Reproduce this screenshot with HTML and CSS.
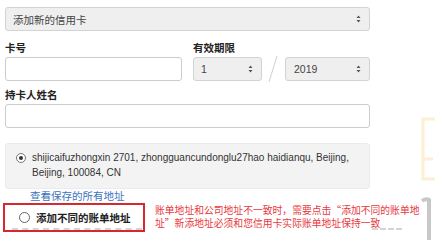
FILE: index.html
```html
<!DOCTYPE html>
<html lang="zh-CN">
<head>
<meta charset="utf-8">
<title>添加新的信用卡</title>
<link rel="stylesheet" href="styles.css">
</head>
<body>
<div class="page">
  <form class="form">
    <div class="select select-wide">
      <span>添加新的信用卡</span>
      <svg class="arrows" width="5" height="8" viewBox="0 0 5 8"><path d="M2.5 0.5 L4.5 3 L0.5 3 Z M2.5 7.5 L4.5 5 L0.5 5 Z" fill="#555"/></svg>
    </div>

    <div class="row">
      <div class="col">
        <div class="label">卡号</div>
        <div class="input"></div>
      </div>
      <div class="col">
        <div class="label">有效期限</div>
        <div class="expiry">
          <div class="select select-month">
            <span>1</span>
            <svg class="arrows" width="5" height="8" viewBox="0 0 5 8"><path d="M2.5 0.5 L4.5 3 L0.5 3 Z M2.5 7.5 L4.5 5 L0.5 5 Z" fill="#555"/></svg>
          </div>
          <svg class="slash" width="23" height="28" viewBox="0 0 23 28"><line x1="15" y1="1" x2="7" y2="27" stroke="#d0d0d0" stroke-width="1"/></svg>
          <div class="select select-year">
            <span>2019</span>
            <svg class="arrows" width="5" height="8" viewBox="0 0 5 8"><path d="M2.5 0.5 L4.5 3 L0.5 3 Z M2.5 7.5 L4.5 5 L0.5 5 Z" fill="#555"/></svg>
          </div>
        </div>
      </div>
    </div>

    <div class="label label-name">持卡人姓名</div>
    <div class="input"></div>

    <div class="address">
      <span class="radio radio-on"></span>
      <p>shijicaifuzhongxin 2701, zhongguancundonglu27hao haidianqu, Beijing, Beijing, 100084, CN</p>
    </div>

    <a class="link" href="#">查看保存的所有地址</a>

    <div class="billing-row">
      <div class="billing">
        <span class="radio"></span>
        <span class="billing-label">添加不同的账单地址</span>
      </div>
      <p class="note">账单地址和公司地址不一致时，需要点击“添加不同的账单地址”新添地址必须和您信用卡实际账单地址保持一致</p>
    </div>
  </form>

  <svg class="mark mark-orange" width="16" height="64" viewBox="0 0 16 64"><path d="M15 2 H3 V62 H15 M3 42 H13" fill="none" stroke="#fcefd6" stroke-width="3"/></svg>
  <svg class="mark mark-gray" width="16" height="44" viewBox="0 0 16 44"><path d="M2 4 Q6 1 9 3 V43" fill="none" stroke="#c8c8c8" stroke-width="4"/></svg>
  <div class="dash dash-left"></div>
  <div class="dash dash-right"></div>
</div>
</body>
</html>
```

FILE: styles.css
```css
html, body {
  margin: 0;
  padding: 0;
  background: #ffffff;
}

body {
  font-family: "Liberation Sans", Arial, "Noto Sans CJK SC", sans-serif;
  font-size: 10.5px;
  color: #333333;
}

.page {
  position: relative;
  width: 435px;
  height: 246px;
  overflow: hidden;
}

.form {
  display: flex;
  flex-direction: column;
  width: 365px;
  padding: 7px 0 0 5px;
  margin: 0;
}

.select {
  box-sizing: border-box;
  height: 24px;
  display: flex;
  align-items: center;
  justify-content: space-between;
  padding: 0 8px 0 8px;
  background: #efefef;
  border: 1px solid #d3d3d3;
  border-radius: 3px;
  color: #444444;
  font-size: 10.5px;
}

.select-wide {
  padding-left: 7px;
}

.arrows {
  display: block;
}

.row {
  display: flex;
  gap: 11px;
  margin-top: 11px;
}

.col {
  display: flex;
  flex-direction: column;
  width: 177px;
}

.label {
  font-weight: bold;
  color: #222222;
  font-size: 10.5px;
  line-height: 13px;
  margin-bottom: 2px;
}

.label-name {
  margin-top: 8px;
  margin-bottom: 2px;
}

.input {
  box-sizing: border-box;
  height: 24px;
  background: #ffffff;
  border: 1px solid #cccccc;
  border-radius: 3px;
}

.expiry {
  display: flex;
  align-items: center;
  height: 24px;
}

.select-month {
  width: 69px;
  padding-left: 7px;
}

.select-year {
  width: 85px;
}

.slash {
  display: block;
  flex: none;
}

.address {
  box-sizing: border-box;
  display: flex;
  align-items: flex-start;
  gap: 6px;
  margin-top: 15px;
  height: 46px;
  padding: 6px 8px 0 10px;
  background: #f3f3f3;
  border: 1px solid #ebebeb;
  border-radius: 3px;
}

.address p {
  margin: 0;
  font-size: 10px;
  line-height: 15px;
  color: #333333;
}

.radio {
  flex: none;
  box-sizing: border-box;
  width: 10px;
  height: 10px;
  margin-top: 2.5px;
  border: 1px solid #777777;
  border-radius: 50%;
  background: #ffffff;
  position: relative;
}

.radio-on::after {
  content: "";
  position: absolute;
  left: 2px;
  top: 2px;
  width: 4px;
  height: 4px;
  border-radius: 50%;
  background: #333333;
}

.link {
  align-self: flex-start;
  margin: 0 0 0 25px;
  font-size: 10.5px;
  line-height: 14px;
  color: #3b73c0;
  text-decoration: none;
}

.billing-row {
  display: flex;
  align-items: flex-start;
  gap: 10px;
  margin: 0 0 0 -2px;
  width: 430px;
}

.billing {
  box-sizing: border-box;
  flex: none;
  display: flex;
  align-items: center;
  gap: 6px;
  width: 142px;
  height: 29px;
  padding: 0 0 1px 14px;
  border: 2px solid #d8282f;
}

.billing .radio {
  width: 11px;
  height: 11px;
  margin-top: 0;
  border-color: #666666;
}

.billing-label {
  font-weight: bold;
  font-size: 10.5px;
  color: #222222;
}

.note {
  margin: 1px 0 0 0;
  width: 268px;
  font-family: "Noto Sans CJK SC", sans-serif;
  font-size: 9.8px;
  line-height: 13px;
  color: #e8383d;
}

.mark {
  position: absolute;
  display: block;
}

.mark-orange {
  left: 420px;
  top: 117px;
}

.mark-gray {
  left: 420px;
  top: 197px;
}

.dash {
  position: absolute;
  height: 0;
  border-top: 2px dashed #d4d4d4;
}

.dash-left {
  left: 12px;
  top: 228px;
  width: 130px;
}

.dash-right {
  left: 372px;
  top: 228px;
  width: 30px;
}
```
